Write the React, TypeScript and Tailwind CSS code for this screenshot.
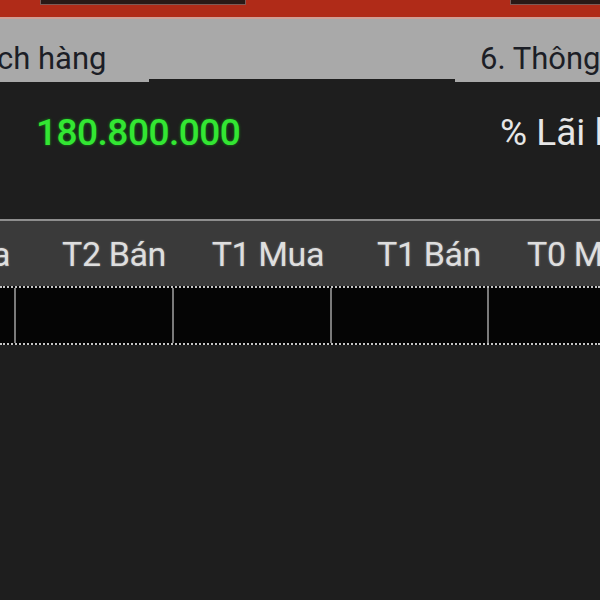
import React from "react"

// --- COMPONENTS ---

const HeaderCell = ({ label, w }: { label: string, w: string }) => (
  <div className={`${w} shrink-0 flex justify-end pr-[7px] whitespace-nowrap`}>
    {label}
  </div>
)

const GridCell = ({ w, last }: { w: string, last?: boolean }) => (
  <div className={`${w} shrink-0 h-full ${last ? "" : "border-r-2 border-[#7a7a7a]"}`} />
)

// --- MAIN PAGE ---

export default function App() {
  return (
    <div className="w-[600px] h-[600px] overflow-hidden bg-[#1e1e1e] flex flex-col font-['Roboto',sans-serif]">

      {/* --- Top red toolbar --- */}
      <div className="h-[17px] shrink-0 bg-[#b02b18] flex items-start">
        <div className="ml-[40px] w-[206px] h-[5px] bg-[#2a1916] border-b border-x border-[#7d5a55]" />
        <div className="ml-auto w-[90px] h-[5px] bg-[#2a1916] border-b border-l border-[#7d5a55]" />
      </div>
      <div className="h-[2px] shrink-0 bg-[#cf9f96]" />

      {/* --- Tab strip --- */}
      <div className="h-[63px] shrink-0 bg-[#a9a9a9] flex items-end text-[31px] text-[#1c1e26] leading-none">
        <div className="w-[152px] h-full flex items-center -ml-[3px] pt-[15px] whitespace-nowrap">ch hàng</div>
        <div className="w-[306px] h-full flex flex-col justify-end">
          <div className="h-[3px] bg-[#1e1e1e]" />
        </div>
        <div className="flex-1 h-full flex items-center pl-[25px] pt-[15px] whitespace-nowrap overflow-hidden">6. Thông tin</div>
      </div>

      {/* --- Summary --- */}
      <div className="h-[137px] shrink-0 flex items-start pt-[33px] text-[37px] leading-[36px]">
        <div className="ml-[36px] text-[#33e633] font-medium [text-shadow:0_0_3px_#128a12] tracking-[-0.5px]">180.800.000</div>
        <div className="ml-auto w-[100px] text-[#e6e6e6] whitespace-nowrap overflow-hidden">% Lãi lỗ</div>
      </div>

      {/* --- Grid header --- */}
      <div className="h-[2px] shrink-0 bg-[#8e8e8e]" />
      <div className="h-[65px] shrink-0 bg-[#3a3a3a] flex items-center text-[34px] leading-none text-[#dedede] [text-shadow:0_0_2px_#888] tracking-[-0.4px] overflow-hidden">
        <div className="w-[15px] shrink-0 flex justify-end pr-[5px] overflow-visible whitespace-nowrap">a</div>
        <HeaderCell label="T2 Bán" w="w-[158px]" />
        <HeaderCell label="T1 Mua" w="w-[158px]" />
        <HeaderCell label="T1 Bán" w="w-[157px]" />
        <div className="flex-1 pl-[39px] whitespace-nowrap">T0 Mua</div>
      </div>

      {/* --- Grid row --- */}
      <div className="h-[59px] shrink-0 bg-[#050505] border-y-2 border-dotted border-[#c4c4c4] flex">
        <GridCell w="w-[16px]" />
        <GridCell w="w-[158px]" />
        <GridCell w="w-[158px]" />
        <GridCell w="w-[157px]" />
        <GridCell w="flex-1" last />
      </div>

      <div className="flex-1 bg-[#1e1e1e]" />
    </div>
  )
}
